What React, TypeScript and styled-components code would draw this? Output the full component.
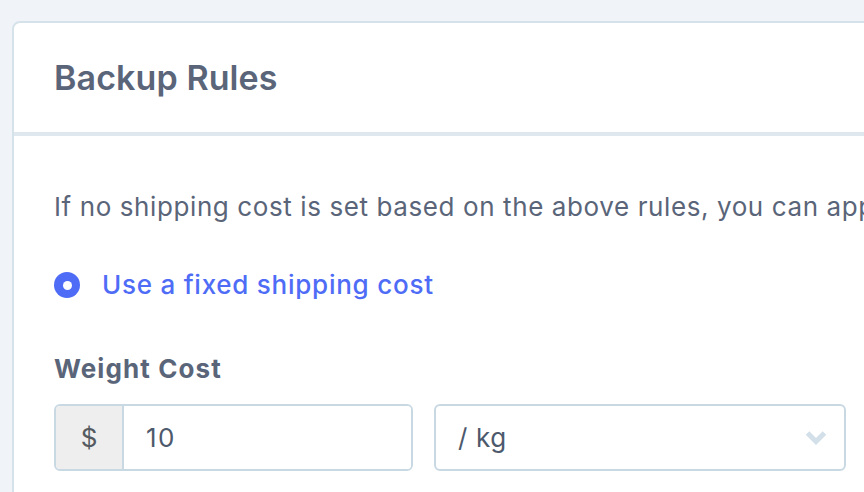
import React from "react";
import styled, { createGlobalStyle } from "styled-components";

const Global = createGlobalStyle`
  html, body { margin: 0; padding: 0; }
  body {
    background: #f0f3f8;
    font-family: Inter, "Noto Sans", sans-serif;
    overflow: hidden;
    width: 864px;
    height: 492px;
  }
`;

const Page = styled.div`
  padding: 21px 0 0 12px;
`;

const Card = styled.section`
  width: 1000px;
  background: #ffffff;
  border: 2px solid #d6e2ea;
  border-radius: 8px;
  box-sizing: border-box;
`;

const Header = styled.header`
  padding: 35px 0 34px 40px;
  border-bottom: 4px solid #dfe8ee;
`;

const Title = styled.h2`
  margin: 0;
  font-size: 34px;
  line-height: 40px;
  font-weight: 600;
  color: #5a6579;
  letter-spacing: 0.1px;
`;

const Body = styled.div`
  padding: 53px 0 40px 40px;
  display: flex;
  flex-direction: column;
`;

const Text = styled.p`
  margin: 0;
  font-size: 26px;
  line-height: 36px;
  letter-spacing: 0.6px;
  color: #5a6579;
  white-space: nowrap;
`;

const RadioRow = styled.label`
  margin-top: 42px;
  display: flex;
  align-items: center;
  gap: 22px;
  cursor: pointer;
`;

const RadioDot = styled.span<{ $checked: boolean }>`
  width: 26px;
  height: 26px;
  border-radius: 50%;
  box-sizing: border-box;
  background: ${(p) => (p.$checked ? "#4e6cf6" : "#fff")};
  display: flex;
  align-items: center;
  justify-content: center;
  flex-shrink: 0;
  &::after {
    content: "";
    width: 9px;
    height: 9px;
    border-radius: 50%;
    background: #fff;
  }
`;

const RadioLabel = styled.span`
  font-size: 26px;
  line-height: 36px;
  letter-spacing: 0.75px;
  color: #4e6cf6;
  font-weight: 500;
`;

const FieldLabel = styled.div`
  margin-top: 48px;
  font-size: 26px;
  line-height: 36px;
  font-weight: 700;
  letter-spacing: 1.1px;
  color: #5a6579;
`;

const Controls = styled.div`
  margin-top: 17px;
  display: flex;
  gap: 21px;
`;

const InputGroup = styled.div`
  width: 359px;
  height: 67px;
  display: flex;
  border: 2px solid #c9d9e4;
  border-radius: 6px;
  box-sizing: border-box;
  overflow: hidden;
`;

const Prefix = styled.span`
  width: 66px;
  background: #eeeeee;
  border-right: 2px solid #c9d9e4;
  display: flex;
  align-items: center;
  justify-content: center;
  font-size: 26px;
  color: #555a60;
`;

const Input = styled.input`
  flex: 1;
  min-width: 0;
  border: none;
  outline: none;
  padding: 0 0 0 22px;
  font-family: Inter, "Noto Sans", sans-serif;
  font-size: 26px;
  letter-spacing: 1.5px;
  color: #4d596c;
  background: #fff;
`;

const Select = styled.div`
  width: 412px;
  height: 67px;
  border: 2px solid #c9d9e4;
  border-radius: 6px;
  box-sizing: border-box;
  display: flex;
  align-items: center;
  justify-content: space-between;
  padding: 0 17px 0 22px;
  font-size: 26px;
  letter-spacing: 0.6px;
  color: #4d596c;
`;

const Chevron = () => (
  <svg width="22" height="15" viewBox="0 0 22 15" fill="none">
    <path d="M2.5 3 L11 11.5 L19.5 3" stroke="#d3e0e9" strokeWidth="5" strokeLinecap="butt" strokeLinejoin="miter" />
  </svg>
);

export default function App() {
  return (
    <>
      <Global />
      <Page>
        <Card>
          <Header>
            <Title>Backup Rules</Title>
          </Header>
          <Body>
            <Text>If no shipping cost is set based on the above rules, you can apply a backup rule.</Text>
            <RadioRow>
              <RadioDot $checked />
              <RadioLabel>Use a fixed shipping cost</RadioLabel>
            </RadioRow>
            <FieldLabel>Weight Cost</FieldLabel>
            <Controls>
              <InputGroup>
                <Prefix>$</Prefix>
                <Input defaultValue="10" />
              </InputGroup>
              <Select>
                <span>/ kg</span>
                <Chevron />
              </Select>
            </Controls>
          </Body>
        </Card>
      </Page>
    </>
  );
}
